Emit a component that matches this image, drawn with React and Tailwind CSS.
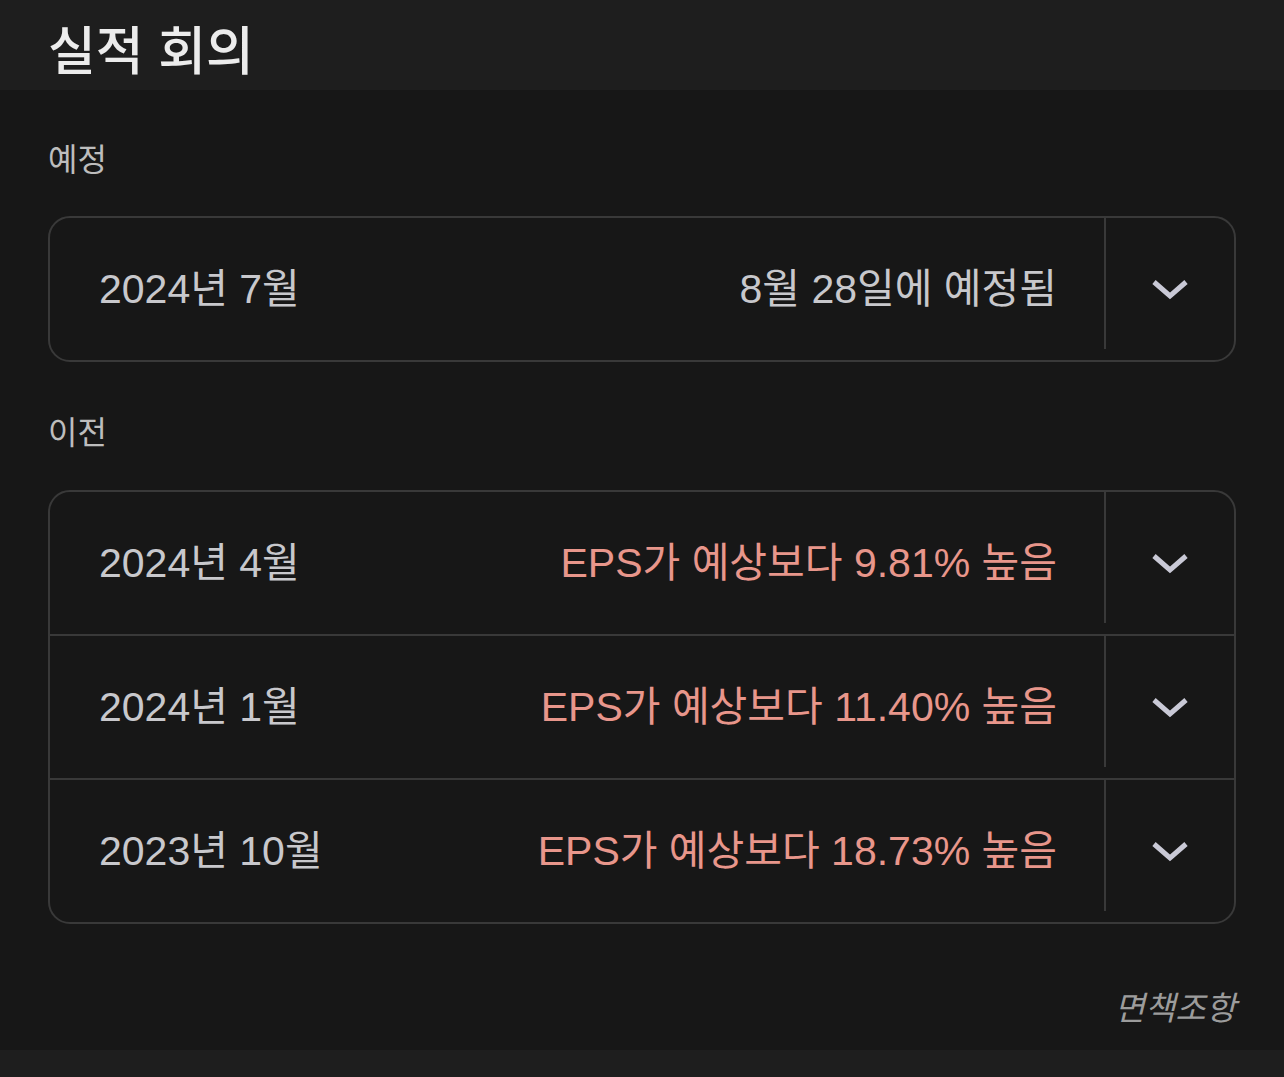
import React from "react";

const FONT = { fontFamily: '"Liberation Sans", "Noto Sans CJK KR", sans-serif' };

const upcoming = [{ period: "2024년 7월", note: "8월 28일에 예정됨", beat: false }];

const past = [
  { period: "2024년 4월", note: "EPS가 예상보다 9.81% 높음", beat: true },
  { period: "2024년 1월", note: "EPS가 예상보다 11.40% 높음", beat: true },
  { period: "2023년 10월", note: "EPS가 예상보다 18.73% 높음", beat: true },
];

function Chevron() {
  return (
    <svg width="38" height="22" viewBox="0 0 38 22" fill="none">
      <polyline
        points="3,4 19,18 35,4"
        stroke="#c9c9d6"
        strokeWidth="5"
        strokeLinejoin="miter"
      />
    </svg>
  );
}

function Row({ item, first }) {
  return (
    <div className={`flex ${first ? "h-[142px]" : "h-[144px] border-t-2 border-[#393939]"}`}>
      <div className="flex flex-1 items-center justify-between pl-[49px] pr-[47px] text-[41px] leading-none">
        <span className="text-[#c8c8cc]">{item.period}</span>
        <span className={item.beat ? "text-[#e8968b]" : "text-[#c8c8cc]"}>{item.note}</span>
      </div>
      <div className="w-[2px] mb-[11px] bg-[#393939]" />
      <div className="flex w-[128px] items-center justify-center">
        <Chevron />
      </div>
    </div>
  );
}

function Group({ items }) {
  return (
    <div className="rounded-[22px] border-2 border-[#393939]">
      {items.map((item, i) => (
        <Row key={item.period} item={item} first={i === 0} />
      ))}
    </div>
  );
}

export default function App() {
  return (
    <div className="min-h-[1077px] w-[1284px] bg-[#171717] flex flex-col" style={FONT}>
      <div className="h-[90px] bg-[#1e1e1e] flex items-center px-[48px] pt-[14px]">
        <h1 className="text-[52px] font-medium text-[#ececec] leading-none">실적 회의</h1>
      </div>

      <div className="px-[48px] flex flex-col">
        <div className="h-[60px] mt-[40px] flex items-center text-[32px] text-[#bdbdbd]">예정</div>
        <div className="mt-[26px]">
          <Group items={upcoming} />
        </div>

        <div className="h-[60px] mt-[41px] flex items-center text-[32px] text-[#bdbdbd]">이전</div>
        <div className="mt-[27px]">
          <Group items={past} />
        </div>

        <div className="h-[60px] mt-[55px] flex items-center justify-end">
          <span className="text-[33px] italic text-[#9c9c9c]">면책조항</span>
        </div>
      </div>

      <div className="mt-auto h-[27px] bg-[#1e1e1e]" />
    </div>
  );
}
